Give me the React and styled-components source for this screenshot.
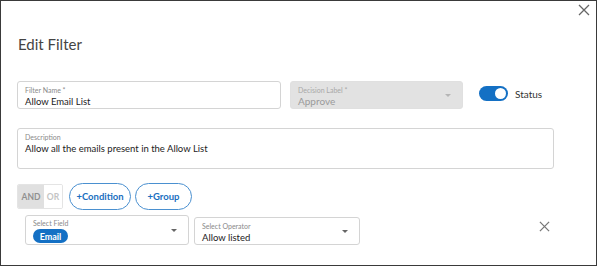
import React from "react";
import styled, { createGlobalStyle } from "styled-components";

const Global = createGlobalStyle`
  html, body { margin: 0; padding: 0; background: #fff; }
  body { font-family: Lato, "Open Sans", sans-serif; }
  * { box-sizing: border-box; }
`;

const Dialog = styled.div`
  position: relative;
  width: 597px;
  height: 266px;
  border: 1px solid #3a3a3a;
  background: #fff;
  padding: 33px 0 0 16px;
  display: flex;
  flex-direction: column;
`;

const CloseBtn = styled.button`
  position: absolute;
  top: 2px;
  right: 5px;
  width: 14px;
  height: 14px;
  padding: 0;
  border: none;
  background: none;
  color: #666;
  display: flex;
  align-items: center;
  justify-content: center;
`;

const Title = styled.h2`
  margin: 0 0 0 1px;
  font-size: 15px;
  font-weight: 400;
  color: #444;
  line-height: 20px;
`;

const Row = styled.div`
  display: flex;
  align-items: center;
  margin-top: ${(p) => p.$mt || 0}px;
  padding-left: ${(p) => p.$pl || 0}px;
`;

const Field = styled.div`
  position: relative;
  width: ${(p) => p.$w}px;
  height: ${(p) => p.$h || 28}px;
  margin-right: ${(p) => p.$mr || 0}px;
  border: 1px solid ${(p) => (p.$disabled ? "#e0e0e0" : "#d4d4d4")};
  background: ${(p) => (p.$disabled ? "#e2e2e2" : "#fff")};
  border-radius: 3px;
  padding: ${(p) => p.$pt || 4}px 28px 0 7px;
  display: flex;
  flex-direction: column;
  align-self: ${(p) => p.$self || "auto"};
`;

const Label = styled.span`
  font-size: 7px;
  line-height: 9px;
  color: ${(p) => (p.$disabled ? "#a8a8a8" : "#8a8a8a")};
`;

const Value = styled.span`
  font-size: ${(p) => p.$fs || 9.5}px;
  line-height: 13px;
  color: ${(p) => (p.$disabled ? "#9a9a9a" : "#222")};
`;

const Caret = styled.span`
  position: absolute;
  right: ${(p) => p.$r || 11}px;
  top: 50%;
  margin-top: -1px;
  width: 0;
  height: 0;
  border-left: 3.5px solid transparent;
  border-right: 3.5px solid transparent;
  border-top: 3.5px solid ${(p) => (p.$disabled ? "#b5b5b5" : "#666")};
`;

const Toggle = styled.span`
  width: 29px;
  height: 15px;
  border-radius: 8px;
  background: #1470c4;
  position: relative;
  margin-right: 7px;
  &::after {
    content: "";
    position: absolute;
    right: 2px;
    top: 2px;
    width: 11px;
    height: 11px;
    border-radius: 50%;
    background: #fff;
  }
`;

const ToggleWrap = styled.label`
  display: flex;
  align-items: center;
  margin-top: -3px;
  margin-left: -1px;
  font-size: 10px;
  color: #333;
`;

const Description = styled(Field)`
  height: 41px;
  padding-top: 4px;
`;

const Segment = styled.div`
  display: flex;
  height: 25px;
  border: 1px solid #e4e4e4;
  border-radius: 2px;
  overflow: hidden;
  margin-right: 6px;
`;

const SegBtn = styled.span`
  display: flex;
  align-items: center;
  justify-content: center;
  width: ${(p) => p.$w}px;
  font-size: 8.5px;
  font-weight: 700;
  color: ${(p) => (p.$active ? "#909090" : "#c4c4c4")};
  background: ${(p) => (p.$active ? "#e0e0e0" : "#fff")};
`;

const Pill = styled.button`
  height: 27px;
  width: ${(p) => p.$w}px;
  margin-right: 4px;
  border: 1px solid #4a90d0;
  border-radius: 14px;
  background: #fff;
  color: #1a6fc0;
  font-family: inherit;
  font-size: 9.5px;
  font-weight: 700;
  padding: 0;
`;

const ChipLine = styled.div`
  display: flex;
  margin-top: 1px;
`;

const Chip = styled.span`
  display: inline-flex;
  align-items: center;
  justify-content: center;
  width: 35px;
  height: 14px;
  border-radius: 7px;
  background: #1470c4;
  color: #fff;
  font-size: 9px;
  font-weight: 700;
`;

const RemoveBtn = styled.button`
  margin-left: 178px;
  margin-top: -7px;
  width: 12px;
  height: 12px;
  padding: 0;
  border: none;
  background: none;
  color: #777;
  display: flex;
  align-items: center;
  justify-content: center;
  align-self: center;
`;

const XIcon = ({ size = 12, sw = 1.3 }) => (
  <svg width={size} height={size} viewBox="0 0 12 12">
    <path d="M1 1 L11 11 M11 1 L1 11" stroke="currentColor" strokeWidth={sw} fill="none" />
  </svg>
);

export default function App() {
  return (
    <>
      <Global />
      <Dialog>
        <CloseBtn aria-label="close">
          <XIcon size={12} sw={1.3} />
        </CloseBtn>
        <Title>Edit Filter</Title>
        <Row $mt={27}>
          <Field $w={264} $mr={9}>
            <Label>Filter Name *</Label>
            <Value>Allow Email List</Value>
          </Field>
          <Field $w={173} $mr={17} $disabled>
            <Label $disabled>Decision Label *</Label>
            <Value $disabled $fs={10}>Approve</Value>
            <Caret $disabled />
          </Field>
          <ToggleWrap>
            <Toggle />
            Status
          </ToggleWrap>
        </Row>
        <Row $mt={19}>
          <Description $w={537}>
            <Label>Description</Label>
            <Value>Allow all the emails present in the Allow List</Value>
          </Description>
        </Row>
        <Row $mt={14}>
          <Segment>
            <SegBtn $w={26} $active>AND</SegBtn>
            <SegBtn $w={18}>OR</SegBtn>
          </Segment>
          <Pill $w={62}>+Condition</Pill>
          <Pill $w={57}>+Group</Pill>
        </Row>
        <Row $mt={5} $pl={8}>
          <Field $w={164} $h={30} $mr={5} $pt={3}>
            <Label>Select Field</Label>
            <ChipLine>
              <Chip>Email</Chip>
            </ChipLine>
            <Caret />
          </Field>
          <Field $w={166} $h={28} $self="flex-end" $pt={4}>
            <Label>Select Operator</Label>
            <Value>Allow listed</Value>
            <Caret />
          </Field>
          <RemoveBtn aria-label="remove">
            <XIcon size={11} sw={1.4} />
          </RemoveBtn>
        </Row>
      </Dialog>
    </>
  );
}
